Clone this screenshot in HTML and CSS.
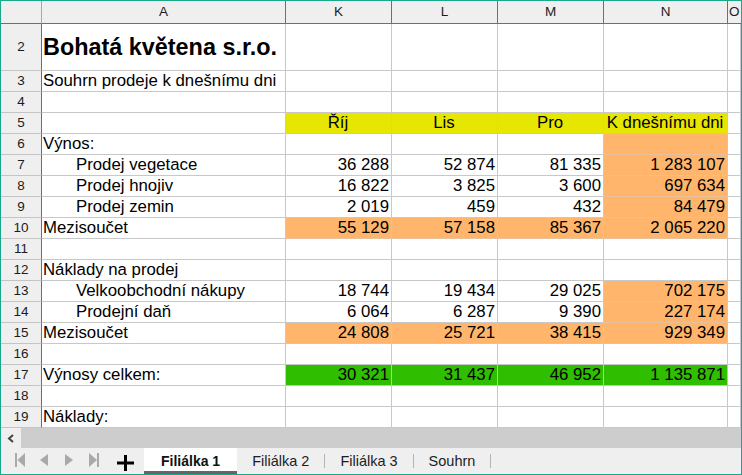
FILE: index.html
```html
<!DOCTYPE html>
<html lang="cs">
  <head>
    <meta charset="UTF-8" />
    <meta name="viewport" content="width=device-width, initial-scale=1.0" />
    <title>Filiálka 1 - Bohatá květena</title>
    <link rel="stylesheet" href="styles.css">
  </head>
  <body>
    <div class="window">
      <div class="sheet" id="sheet">
        <div class="corner"></div>
        <div class="col-head">A</div>
        <div class="col-head">K</div>
        <div class="col-head">L</div>
        <div class="col-head">M</div>
        <div class="col-head">N</div>
        <div class="col-head col-cut">O</div>
      </div>

      <div class="hscroll">
        <span class="scroll-btn">
          <svg width="20" height="20" viewBox="0 0 20 20">
            <polyline points="12,7 8,10.5 12,14" fill="none" stroke="#444" stroke-width="2" />
          </svg>
        </span>
        <span class="scroll-track"></span>
      </div>

      <div class="tabbar">
        <span class="nav-btn">
          <svg width="25" height="26" viewBox="0 0 25 26">
            <rect x="7" y="5" width="2" height="14" fill="#a9a9a9" />
            <polygon points="17,5 17,19 9.5,12" fill="#a9a9a9" />
          </svg>
        </span>
        <span class="nav-btn">
          <svg width="25" height="26" viewBox="0 0 25 26">
            <polygon points="15,6 15,18 7,12" fill="#a9a9a9" />
          </svg>
        </span>
        <span class="nav-btn">
          <svg width="25" height="26" viewBox="0 0 25 26">
            <polygon points="7,6 7,18 15,12" fill="#a9a9a9" />
          </svg>
        </span>
        <span class="nav-btn">
          <svg width="25" height="26" viewBox="0 0 25 26">
            <polygon points="6,5 6,19 14,12" fill="#a9a9a9" />
            <rect x="14" y="5" width="2" height="14" fill="#a9a9a9" />
          </svg>
        </span>
        <span class="nav-btn add-btn">
          <svg width="25" height="26" viewBox="0 0 25 26">
            <rect x="5" y="13.5" width="17" height="3" fill="#000" />
            <rect x="12" y="7" width="3" height="16" fill="#000" />
          </svg>
        </span>
        <span class="tab active">Filiálka 1</span>
        <span class="tab">Filiálka 2</span>
        <span class="tab-sep"></span>
        <span class="tab">Filiálka 3</span>
        <span class="tab-sep"></span>
        <span class="tab">Souhrn</span>
        <span class="tab-sep"></span>
      </div>
    </div>

    <script>
      document.addEventListener("DOMContentLoaded", function () {
        // fill: y = yellow, o = orange, g = green, - = none
        const rows = [
          { n: 2, a: "Bohatá květena s.r.o.", title: true },
          { n: 3, a: "Souhrn prodeje k dnešnímu dni" },
          { n: 4 },
          { n: 5, v: ["Říj", "Lis", "Pro", "K dnešnímu dni"], fill: "yyyy", center: true },
          { n: 6, a: "Výnos:", fill: "---o" },
          { n: 7, a: "Prodej vegetace", indent: true, v: ["36 288", "52 874", "81 335", "1 283 107"], fill: "---o" },
          { n: 8, a: "Prodej hnojiv", indent: true, v: ["16 822", "3 825", "3 600", "697 634"], fill: "---o" },
          { n: 9, a: "Prodej zemin", indent: true, v: ["2 019", "459", "432", "84 479"], fill: "---o" },
          { n: 10, a: "Mezisoučet", v: ["55 129", "57 158", "85 367", "2 065 220"], fill: "oooo" },
          { n: 11 },
          { n: 12, a: "Náklady na prodej" },
          { n: 13, a: "Velkoobchodní nákupy", indent: true, v: ["18 744", "19 434", "29 025", "702 175"], fill: "---o" },
          { n: 14, a: "Prodejní daň", indent: true, v: ["6 064", "6 287", "9 390", "227 174"], fill: "---o" },
          { n: 15, a: "Mezisoučet", v: ["24 808", "25 721", "38 415", "929 349"], fill: "oooo" },
          { n: 16 },
          { n: 17, a: "Výnosy celkem:", v: ["30 321", "31 437", "46 952", "1 135 871"], fill: "gggg" },
          { n: 18 },
          { n: 19, a: "Náklady:" },
        ];

        const fills = { y: "fill-yellow", o: "fill-orange", g: "fill-green" };
        const sheet = document.getElementById("sheet");

        function addCell(text, classes) {
          const cell = document.createElement("div");
          cell.className = classes;
          cell.textContent = text || "";
          sheet.appendChild(cell);
        }

        rows.forEach(function (row) {
          addCell(row.n, row.title ? "row-head tall" : "row-head");

          let aClass = "cell";
          if (row.title) aClass += " title";
          if (row.indent) aClass += " indent";
          addCell(row.a, aClass);

          for (let i = 0; i < 4; i++) {
            let cls = "cell " + (row.center ? "center" : "num");
            const f = row.fill ? row.fill[i] : "-";
            if (fills[f]) cls += " " + fills[f];
            addCell(row.v ? row.v[i] : "", cls);
          }

          addCell("", "cell");
        });
      });
    </script>
  </body>
</html>
```

FILE: styles.css
```css
body {
  margin: 0;
  padding: 0;
  background-color: #ffffff;
  font-family: "Liberation Sans", Arial, sans-serif;
  color: #000;
}
.window {
  width: 742px;
  height: 475px;
  box-sizing: border-box;
  border: 1px solid #18a98b;
  display: flex;
  flex-direction: column;
  overflow: hidden;
}
.sheet {
  flex: none;
  height: 427px;
  display: grid;
  grid-template-columns: 41px 244px 106px 106px 106px 124px 1fr;
  grid-template-rows: 23px 47px repeat(17, 21px);
  overflow: hidden;
}
.sheet > div {
  box-sizing: border-box;
  white-space: nowrap;
  overflow: hidden;
}
.corner {
  background-color: #efefef;
  border-right: 1px solid #a8a8a8;
  border-bottom: 1px solid #6f6f6f;
}
.col-head {
  background-color: #efefef;
  border-right: 1px solid #6f6f6f;
  border-bottom: 1px solid #6f6f6f;
  font-size: 13.5px;
  line-height: 22px;
  text-align: center;
  color: #1c1c1c;
}
.col-head.col-cut {
  text-align: left;
  padding-left: 1px;
  border-right: none;
}
.row-head {
  background-color: #efefef;
  border-right: 1px solid #6f6f6f;
  border-bottom: 1px solid #c4c4c4;
  font-size: 13.5px;
  line-height: 20px;
  text-align: center;
  color: #1c1c1c;
}
.row-head.tall {
  line-height: 46px;
}
.cell {
  border-right: 1px solid #c8c8c8;
  border-bottom: 1px solid #c8c8c8;
  font-size: 16.8px;
  line-height: 20px;
  padding: 0 2px 0 1px;
}
.cell.title {
  font-size: 23.4px;
  font-weight: bold;
  line-height: 46px;
}
.cell.indent {
  padding-left: 34px;
}
.cell.num {
  text-align: right;
}
.cell.center {
  text-align: center;
}
.fill-yellow {
  background-color: #e6e600;
}
.fill-orange {
  background-color: #ffb66c;
  border-color: #e8c09a;
}
.fill-green {
  background-color: #30be00;
  border-color: #a6d890;
}
.hscroll {
  flex: none;
  height: 20px;
  display: flex;
  background-color: #cdcdcd;
}
.scroll-btn {
  width: 20px;
  height: 20px;
  background-color: #efefef;
}
.scroll-btn svg {
  display: block;
}
.scroll-track {
  flex: 1;
}
.tabbar {
  flex: none;
  height: 26px;
  display: flex;
  align-items: flex-start;
  padding-left: 7px;
  background-color: #efefef;
  font-size: 14.5px;
  color: #1d1d1d;
}
.nav-btn {
  width: 25px;
  height: 26px;
}
.nav-btn svg {
  display: block;
}
.add-btn {
  margin-left: 4px;
  margin-right: 7px;
}
.tab {
  height: 23px;
  box-sizing: border-box;
  padding: 4px 15px 0;
  line-height: 19px;
}
.tab.active {
  height: 26px;
  padding: 4px 17px 0;
  background-color: #ffffff;
  border-bottom: 3px solid #666666;
  font-size: 14px;
  font-weight: bold;
  color: #111;
}
.tab-sep {
  width: 1px;
  height: 14px;
  margin-top: 6px;
  background-color: #b4b4b4;
}
```
